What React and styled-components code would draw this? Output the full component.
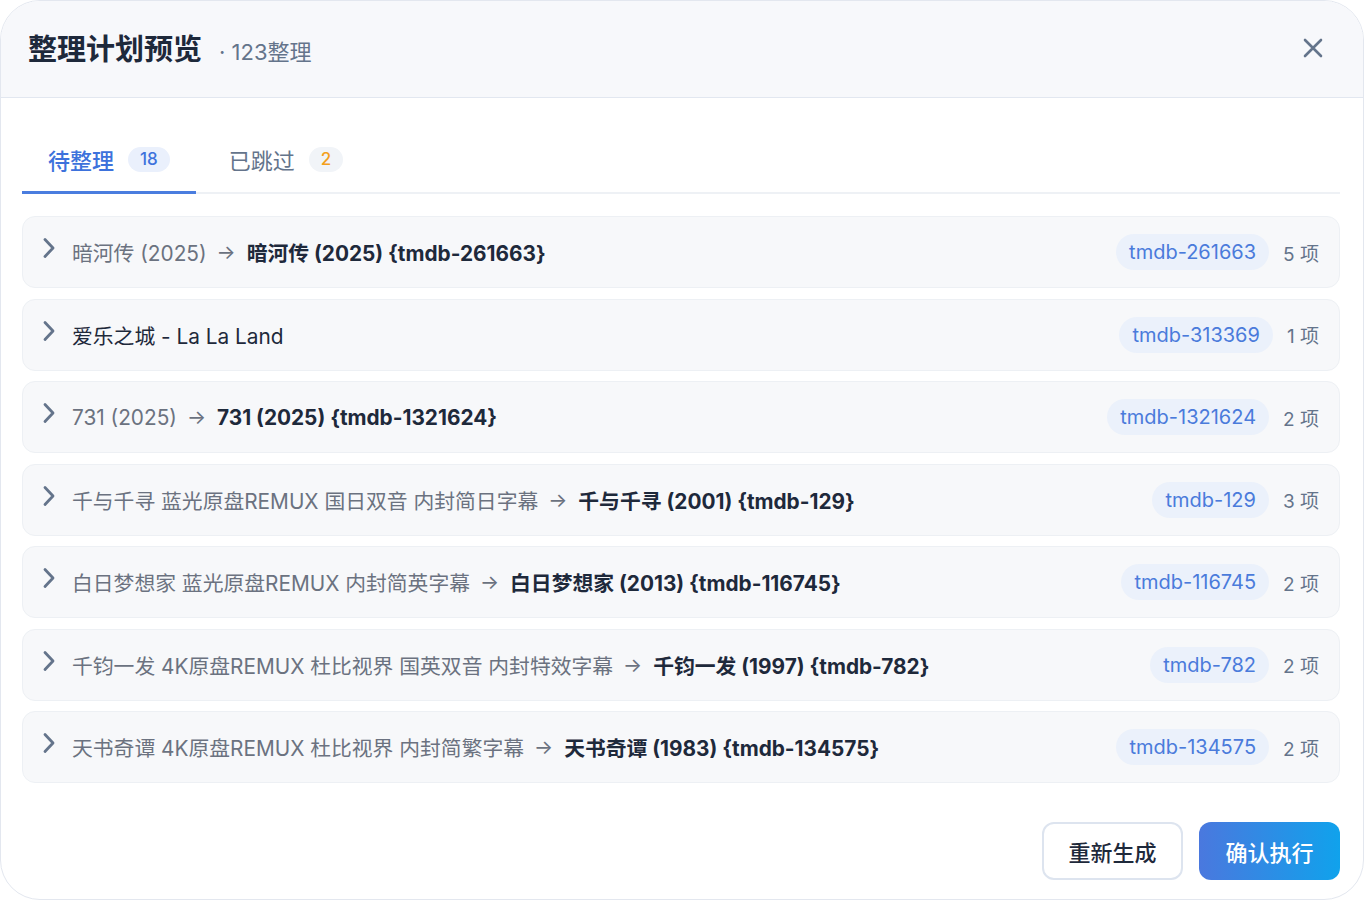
import React from "react";
import styled, { createGlobalStyle } from "styled-components";

const GlobalStyle = createGlobalStyle`
    * {
        box-sizing: border-box;
    }
    html, body {
        margin: 0;
        padding: 0;
        background: #fff;
    }
    body {
        font-family: Inter, "Noto Sans CJK SC", sans-serif;
        color: #1e293b;
    }
`;

const rows = [
    { from: "暗河传 (2025)", to: "暗河传 (2025) {tmdb-261663}", tag: "tmdb-261663", count: 5 },
    { plain: "爱乐之城 - La La Land", tag: "tmdb-313369", count: 1 },
    { from: "731 (2025)", to: "731 (2025) {tmdb-1321624}", tag: "tmdb-1321624", count: 2 },
    { from: "千与千寻 蓝光原盘REMUX 国日双音 内封简日字幕", to: "千与千寻 (2001) {tmdb-129}", tag: "tmdb-129", count: 3 },
    { from: "白日梦想家 蓝光原盘REMUX 内封简英字幕", to: "白日梦想家 (2013) {tmdb-116745}", tag: "tmdb-116745", count: 2 },
    { from: "千钧一发 4K原盘REMUX 杜比视界 国英双音 内封特效字幕", to: "千钧一发 (1997) {tmdb-782}", tag: "tmdb-782", count: 2 },
    { from: "天书奇谭 4K原盘REMUX 杜比视界 内封简繁字幕", to: "天书奇谭 (1983) {tmdb-134575}", tag: "tmdb-134575", count: 2 },
];

function Chevron() {
    return (
        <svg width="14" height="24" viewBox="0 0 14 24" fill="none">
            <polyline
                points="3,3.5 11,12 3,20.5"
                stroke="#64748b"
                strokeWidth="2.8"
                strokeLinecap="round"
                strokeLinejoin="round"
            />
        </svg>
    );
}

function CloseIcon() {
    return (
        <svg width="20" height="20" viewBox="0 0 20 20" fill="none">
            <path d="M2 2 L18 18 M18 2 L2 18" stroke="#64748b" strokeWidth="2.6" strokeLinecap="round" />
        </svg>
    );
}

function App() {
    return (
        <>
            <GlobalStyle />
            <Modal>
                <Header>
                    <TitleGroup>
                        <Title>整理计划预览</Title>
                        <Subtitle>· 123整理</Subtitle>
                    </TitleGroup>
                    <CloseButton>
                        <CloseIcon />
                    </CloseButton>
                </Header>
                <Body>
                    <Tabs>
                        <Tab active>
                            待整理
                            <Badge active>18</Badge>
                        </Tab>
                        <Tab>
                            已跳过
                            <Badge warn>2</Badge>
                        </Tab>
                    </Tabs>
                    <List>
                        {rows.map((row) => (
                            <Row key={row.tag}>
                                <ChevronBox>
                                    <Chevron />
                                </ChevronBox>
                                <RowText>
                                    {row.plain ? (
                                        <Plain>{row.plain}</Plain>
                                    ) : (
                                        <>
                                            <From>{row.from}</From>
                                            <Arrow>→</Arrow>
                                            <To>{row.to}</To>
                                        </>
                                    )}
                                </RowText>
                                <Tag>{row.tag}</Tag>
                                <Count>{row.count} 项</Count>
                            </Row>
                        ))}
                    </List>
                </Body>
                <Footer>
                    <Button>重新生成</Button>
                    <Button primary>确认执行</Button>
                </Footer>
            </Modal>
        </>
    );
}

const Modal = styled.div`
    width: 1364px;
    height: 900px;
    border: 1px solid #e3e7ef;
    border-radius: 40px;
    overflow: hidden;
    background: #fff;
    display: flex;
    flex-direction: column;
`;
const Header = styled.div`
    height: 97px;
    flex-shrink: 0;
    background: #f7f8fb;
    border-bottom: 1px solid #e2e7f0;
    display: flex;
    align-items: center;
    justify-content: space-between;
    padding: 0 40px 0 27px;
`;
const TitleGroup = styled.div`
    display: flex;
    align-items: baseline;
    gap: 17px;
    margin-top: -5px;
`;
const Title = styled.h1`
    margin: 0;
    font-size: 29px;
    font-weight: 700;
    color: #1e293b;
`;
const Subtitle = styled.span`
    font-size: 22px;
    color: #64748b;
`;
const CloseButton = styled.div`
    display: flex;
    align-items: center;
    margin-top: -2px;
`;
const Body = styled.div`
    flex: 1;
    padding: 32px 23px 0 21px;
    display: flex;
    flex-direction: column;
`;
const Tabs = styled.div`
    display: flex;
    border-bottom: 2px solid #eef1f5;
    margin-bottom: 22px;
`;
const Tab = styled.div`
    display: flex;
    align-items: center;
    gap: 14px;
    height: 64px;
    padding: 0 26px 3px;
    margin-right: 7px;
    margin-bottom: -2px;
    font-size: 22px;
    color: ${({ active }) => (active ? "#3d72dc" : "#64748b")};
    font-weight: ${({ active }) => (active ? 500 : 400)};
    border-bottom: 3px solid ${({ active }) => (active ? "#4a7ddf" : "transparent")};
`;
const Badge = styled.span`
    display: inline-flex;
    align-items: center;
    justify-content: center;
    height: 25px;
    min-width: 33px;
    padding: 0 12px;
    border-radius: 13px;
    font-size: 17px;
    font-weight: 500;
    background: ${({ active }) => (active ? "#eaf0fc" : "#f1f4f8")};
    color: ${({ active, warn }) => (active ? "#3d72dc" : warn ? "#f4a01c" : "#64748b")};
`;
const List = styled.div`
    display: flex;
    flex-direction: column;
    gap: 10.5px;
`;
const Row = styled.div`
    display: flex;
    align-items: center;
    height: 72px;
    padding: 0 20px 0 19px;
    background: #f7f8fa;
    border: 1px solid #edf0f4;
    border-radius: 13px;
`;
const ChevronBox = styled.div`
    display: flex;
    align-items: center;
    margin-right: 16px;
    margin-top: -8px;
`;
const RowText = styled.div`
    flex: 1;
    display: flex;
    align-items: center;
    font-size: 20.8px;
    white-space: nowrap;
    min-width: 0;
`;
const From = styled.span`
    color: #6b7280;
`;
const Arrow = styled.span`
    color: #6b7280;
    margin: 0 11px 0 10px;
    font-size: 20px;
`;
const To = styled.span`
    color: #1e293b;
    font-weight: 700;
`;
const Plain = styled.span`
    color: #1e293b;
`;
const Tag = styled.span`
    display: inline-flex;
    align-items: center;
    height: 36px;
    padding: 0 13px;
    border-radius: 18px;
    background: #ebf1fb;
    color: #4a7bdb;
    font-size: 20px;
    margin-right: 14px;
`;
const Count = styled.span`
    font-size: 19px;
    color: #64748b;
`;
const Footer = styled.div`
    display: flex;
    justify-content: flex-end;
    gap: 16px;
    padding: 0 23px 19px 0;
`;
const Button = styled.button`
    width: 141px;
    height: 58px;
    border-radius: 12px;
    font-family: Inter, "Noto Sans CJK SC", sans-serif;
    font-size: 22px;
    font-weight: 500;
    cursor: pointer;
    border: ${({ primary }) => (primary ? "none" : "2px solid #dde4ef")};
    background: ${({ primary }) =>
        primary ? "linear-gradient(90deg, #4a78de 0%, #10a2ec 100%)" : "#fff"};
    color: ${({ primary }) => (primary ? "#fff" : "#1e293b")};
`;

export default App;
